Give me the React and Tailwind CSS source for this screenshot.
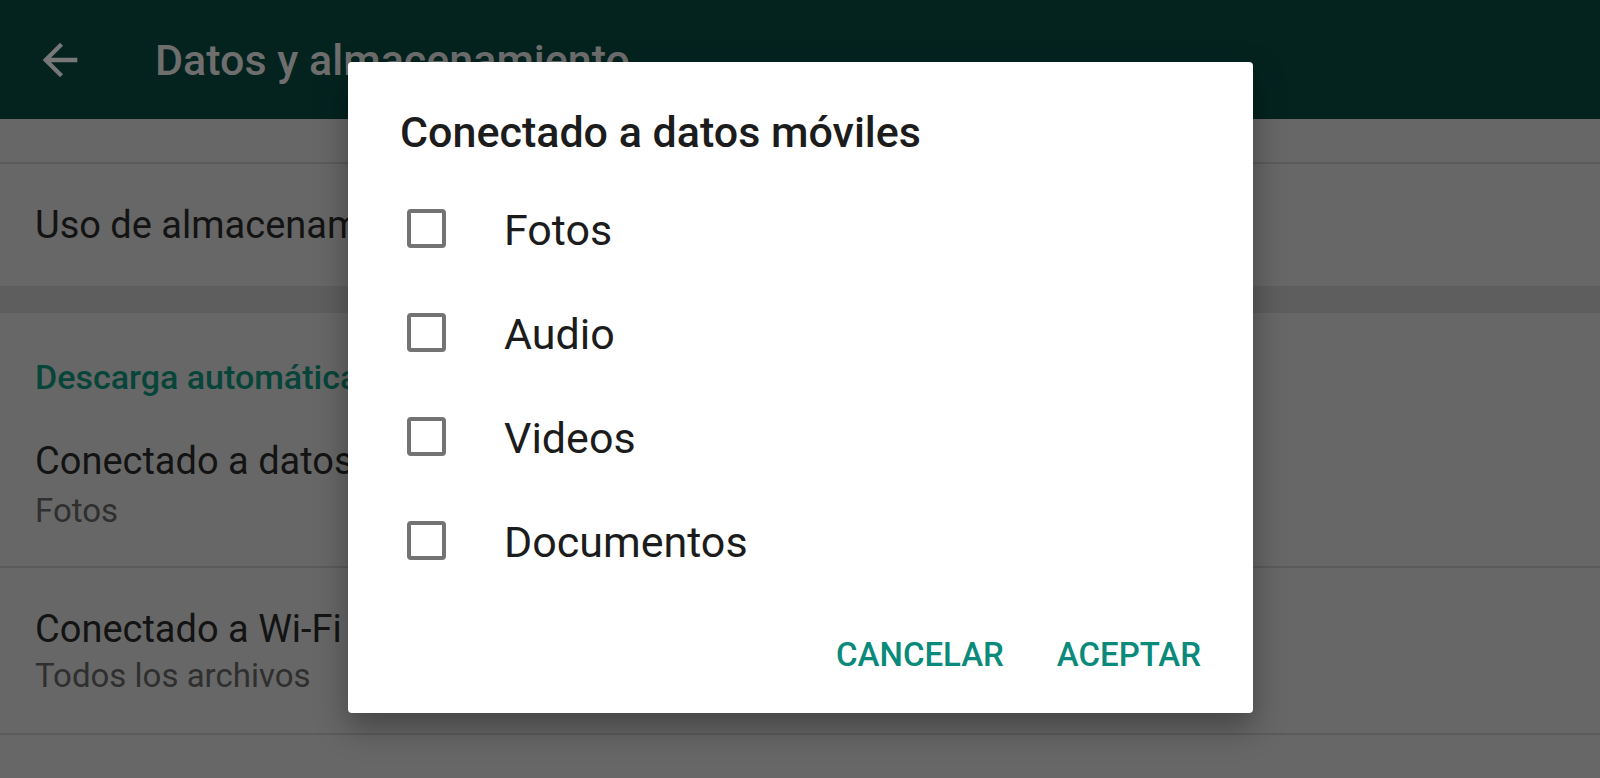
import { useState } from 'react'

const options = ['Fotos', 'Audio', 'Videos', 'Documentos']

function BackArrow() {
  return (
    <svg viewBox="0 0 24 24" className="w-[52px] h-[52px] shrink-0" fill="#777777">
      <path d="M20 11H7.83l5.59-5.59L12 4l-8 8 8 8 1.41-1.41L7.83 13H20v-2z" />
    </svg>
  )
}

function Divider() {
  return <div className="h-[2px] bg-[#5b5b5b]" />
}

function OptionRow({ label, checked, onToggle }) {
  return (
    <div onClick={onToggle} className="flex h-[104px] items-center cursor-pointer select-none">
      <div className="ml-[59px] flex h-[39px] w-[39px] shrink-0 items-center justify-center rounded-[4px] border-[4px] border-[#737373]">
        {checked && <div className="h-[19px] w-[19px] bg-[#737373]" />}
      </div>
      <span className="ml-[58px] pt-[5px] text-[43px] leading-none text-[#1c1c1c]">{label}</span>
    </div>
  )
}

export default function App() {
  const [selected, setSelected] = useState([])

  const toggle = (name) =>
    setSelected((s) => (s.includes(name) ? s.filter((x) => x !== name) : [...s, name]))

  return (
    <div className="relative h-[778px] w-full overflow-hidden bg-[#676767] font-['Roboto',sans-serif]">
      {/* app bar */}
      <header className="flex h-[119px] items-center bg-[#04231f] pl-[34px]">
        <BackArrow />
        <h1 className="ml-[69px] pt-[2px] text-[43px] font-medium leading-none text-[#6e6e6e]">
          Datos y almacenamiento
        </h1>
      </header>

      {/* settings list */}
      <div>
        <div className="h-[43px]" />
        <Divider />
        <div className="flex h-[122px] items-center pl-[35px]">
          <span className="text-[38px] leading-none text-[#131313]">Uso de almacenamiento</span>
        </div>
        <div className="h-[27px] bg-[#5e5e5e]" />
        <div className="flex h-[253px] flex-col pl-[35px] pt-[47px]">
          <span className="text-[34px] font-medium leading-none text-[#07443a]">Descarga automática</span>
          <span className="mt-[48px] text-[38px] leading-none text-[#131313]">Conectado a datos móviles</span>
          <span className="mt-[14px] text-[33px] leading-none text-[#2f2f2f]">Fotos</span>
        </div>
        <Divider />
        <div className="flex h-[165px] flex-col pl-[35px] pt-[42px]">
          <span className="text-[38px] leading-none text-[#131313]">Conectado a Wi-Fi</span>
          <span className="mt-[11px] text-[33px] leading-none text-[#2f2f2f]">Todos los archivos</span>
        </div>
        <Divider />
      </div>

      {/* dialog */}
      <div className="absolute left-[348px] top-[62px] flex h-[651px] w-[905px] flex-col rounded-[4px] bg-white shadow-[0_14px_32px_rgba(0,0,0,0.35)]">
        <h2 className="ml-[52px] mt-[49px] text-[43px] font-medium leading-none text-[#1c1c1c]">
          Conectado a datos móviles
        </h2>
        <div className="mt-[22px] flex flex-col">
          {options.map((o) => (
            <OptionRow key={o} label={o} checked={selected.includes(o)} onToggle={() => toggle(o)} />
          ))}
        </div>
        <div className="mt-auto mb-[42px] flex justify-end gap-[53px] pr-[52px]">
          <button className="text-[33px] font-medium leading-none text-[#098a7a]">CANCELAR</button>
          <button className="text-[33px] font-medium leading-none text-[#098a7a]">ACEPTAR</button>
        </div>
      </div>
    </div>
  )
}
